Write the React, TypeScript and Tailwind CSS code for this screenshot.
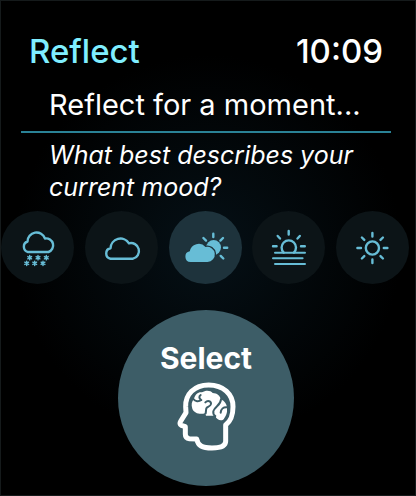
import type { ReactNode } from "react";
import { useState } from "react";

const CLOUD_SNOW = (
  <>
    <path d="M27 41A5.5 5.5 0 0 1 26.5 30.5A9 9 0 0 1 44 27.5A7 7 0 0 1 47.5 41Z" />
    <path
      strokeWidth="1.4"
      d="M28.7 44.5v4.4M26.8 45.6l3.8 2.2M26.8 47.8l3.8-2.2M37 44.5v4.4M35.1 45.6l3.8 2.2M35.1 47.8l3.8-2.2M45.3 44.5v4.4M43.4 45.6l3.8 2.2M43.4 47.8l3.8-2.2M25.7 50.1v4.4M23.8 51.2l3.8 2.2M23.8 53.4l3.8-2.2M33.7 50.1v4.4M31.8 51.2l3.8 2.2M31.8 53.4l3.8-2.2M42 50.1v4.4M40.1 51.2l3.8 2.2M40.1 53.4l3.8-2.2"
    />
  </>
);

const CLOUD = (
  <path d="M25.5 47.7A5.3 5.3 0 0 1 25.5 37.3A10 10 0 0 1 44 32.3A7.8 7.8 0 1 1 48 47.7Z" />
);

const CLOUD_SUN = (
  <>
    <circle cx="44.6" cy="36.4" r="7.4" fill="currentColor" stroke="none" />
    <path d="M44.3 22.8v3.2M34.4 27l2.6 2.6M54 27l-2.6 2.6M55 36.8h3.2M51.7 44.9l2.6 2.6" />
    <path
      className="fill-current stroke-[#1e333c]"
      strokeWidth="2.6"
      d="M21.5 51A5.4 5.4 0 0 1 20.8 40.3A9 9 0 0 1 36.5 36A7.6 7.6 0 1 1 38.5 51Z"
    />
    <path
      className="fill-current"
      stroke="none"
      d="M21.5 51A5.4 5.4 0 0 1 20.8 40.3A9 9 0 0 1 36.5 36A7.6 7.6 0 1 1 38.5 51Z"
    />
  </>
);

const SUNSET = (
  <>
    <path d="M31.7 41.7A7.2 7.2 0 1 1 41.9 41.7" />
    <path d="M36.7 20v3.6M25.7 25l2.3 2.5M47.8 25l-2.3 2.5M21 35.3h3.6M49 35.3h3.8" />
    <path strokeWidth="2" d="M23 41.7h30M21 47.3h29.6M23 53h30" />
  </>
);

const SUN = (
  <>
    <circle cx="36.4" cy="37" r="6.6" />
    <path d="M36.4 22v3.6M36.4 48.4v3.6M21.4 37h3.6M47.8 37h3.6M25.9 26.5l2.4 2.4M44.5 45.1l2.4 2.4M46.9 26.5l-2.4 2.4M28.3 45.1l-2.4 2.4" />
  </>
);

const moods: { name: string; icon: ReactNode }[] = [
  { name: "Snowy", icon: CLOUD_SNOW },
  { name: "Cloudy", icon: CLOUD },
  { name: "Partly sunny", icon: CLOUD_SUN },
  { name: "Sunset", icon: SUNSET },
  { name: "Sunny", icon: SUN },
];

const HeadIcon = () => (
  <svg viewBox="0 0 240 240" className="size-20" fill="none" aria-hidden="true">
    <path
      className="stroke-white"
      strokeWidth="15"
      strokeLinejoin="round"
      d="M59 98C58 62 84 33 128 33C172 33 201 61 201 98C201 126 195 140 179 153V202C179 216 168 222 138 222C108 222 96 215 92 195L70 194C61 193 58 189 58 181V158L46 154C41 152 41 147 44 142L60 116Z"
    />
    <path
      className="fill-white"
      d="M84 75C87 61 97 53 108 55C119 48 134 49 140 57C153 57 163 66 164 76C176 80 185 94 183 107C184 121 177 128 174 134C168 143 151 138 148 125H120L118 117C104 123 84 118 79 104C75 92 77 82 84 75Z"
    />
    <path
      className="stroke-[#3d5d67]"
      strokeWidth="6"
      strokeLinecap="round"
      d="M82 75C88 83 98 84 106 78M106 78C99 74 98 67 104 63M118 85C125 78 136 81 135 90C134 98 123 97 121 103C120 108 120 112 119 118M165 76C164 94 146 97 142 112C141 119 143 123 148 126M183 100C172 99 165 105 164 116"
    />
  </svg>
);

const App = () => {
  const [mood, setMood] = useState("Partly sunny");

  return (
    <main className="min-h-screen border border-[#151a1b] bg-black bg-[radial-gradient(circle_at_center,#051016_0%,#000_60%)] pr-1 pb-2 font-['Inter',sans-serif] text-white">
      <header className="flex items-center justify-between px-7 pt-8 text-[33px] leading-9 font-medium">
        <h1 className="text-[#7feeff]">Reflect</h1>
        <time>10:09</time>
      </header>

      <h2 className="mx-5 mt-4.5 border-b-2 border-[#2a8296] pb-2 pl-7 text-[29px] leading-9 whitespace-nowrap">
        Reflect for a moment...
      </h2>

      <fieldset className="mt-1.5">
        <legend className="px-12 text-[25px] leading-8 italic">
          What best describes your current mood?
        </legend>
        <div className="mt-2 flex justify-between pr-0.5">
          {moods.map(({ name, icon }) => (
            <label
              key={name}
              className="size-[73px] cursor-pointer rounded-full bg-[#0c1417] text-[#67bdd6] has-checked:bg-[#1e333c]"
            >
              <input
                type="radio"
                name="mood"
                value={name}
                aria-label={name}
                checked={mood === name}
                onChange={() => setMood(name)}
                className="sr-only"
              />
              <svg
                viewBox="0 0 73 73"
                className="size-full"
                fill="none"
                stroke="currentColor"
                strokeWidth="2.4"
                strokeLinecap="round"
                strokeLinejoin="round"
                aria-hidden="true"
              >
                {icon}
              </svg>
            </label>
          ))}
        </div>
      </fieldset>

      <button
        type="button"
        className="mx-auto mt-6.5 flex size-44 cursor-pointer flex-col items-center justify-center rounded-full bg-[#3d5d67] text-[30px] leading-8 font-bold"
      >
        Select
        <HeadIcon />
      </button>
    </main>
  );
};

export default App;
